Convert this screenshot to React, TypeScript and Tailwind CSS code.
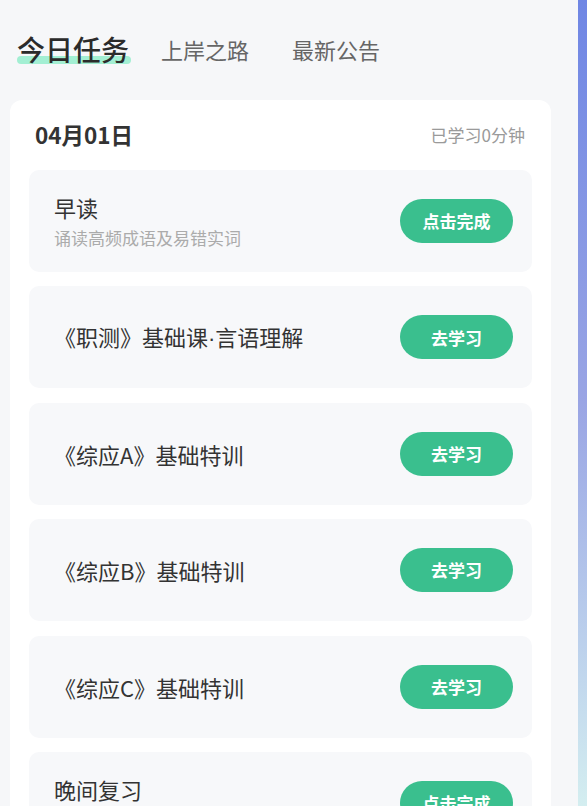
import React from "react";

const items: { title: React.ReactNode; sub?: string; btn: string }[] = [
  { title: "早读", sub: "诵读高频成语及易错实词", btn: "点击完成" },
  {
    title: (
      <>
        《职测》基础课
        <span style={{ fontFamily: '"Liberation Sans", sans-serif' }}>·</span>
        言语理解
      </>
    ),
    btn: "去学习",
  },
  { title: "《综应A》基础特训", btn: "去学习" },
  { title: "《综应B》基础特训", btn: "去学习" },
  { title: "《综应C》基础特训", btn: "去学习" },
  { title: "晚间复习", sub: "回顾今日所学内容", btn: "点击完成" },
];

export default function App() {
  return (
    <div
      className="flex w-[587px] h-[806px] overflow-hidden"
      style={{ fontFamily: '"Noto Sans CJK SC", "Noto Sans", sans-serif' }}
    >
      <div className="w-[578px] h-full bg-[#f6f7f9] flex flex-col">
        <div className="flex items-center shrink-0 h-[96px] pl-[17px] pt-[2px]">
          <div className="relative">
            <div className="absolute left-0 right-[-2px] top-[27px] h-[8px] rounded-full bg-[#a3efd3]" />
            <span className="relative text-[28px] leading-[40px] font-medium text-[#2b2b2b]">今日任务</span>
          </div>
          <span className="ml-[32px] text-[22px] leading-[40px] text-[#666]">上岸之路</span>
          <span className="ml-[43px] text-[22px] leading-[40px] text-[#666]">最新公告</span>
        </div>
        <div className="ml-[10px] w-[541px] mt-[4px] flex-1 bg-white rounded-t-[12px] px-[19px]">
          <div className="flex items-center justify-between h-[70px] pl-[6px] pr-[7px]">
            <span className="text-[22.5px] font-bold text-[#333]">04月01日</span>
            <span className="text-[17px] text-[#9a9a9a]">已学习0分钟</span>
          </div>
          <div className="flex flex-col gap-[14.4px]">
            {items.map((it, i) => (
              <div
                key={i}
                className="h-[102px] shrink-0 rounded-[10px] bg-[#f7f8fa] flex items-center justify-between pl-[25px] pr-[19px]"
              >
                <div className="flex flex-col">
                  <span className="text-[22px] leading-[30px] text-[#333]">{it.title}</span>
                  {it.sub && (
                    <span className="text-[17px] leading-[24px] mt-[4px] text-[#ababab]">{it.sub}</span>
                  )}
                </div>
                <div className="w-[113px] h-[44px] rounded-full bg-[#3abf8e] flex items-center justify-center text-white text-[17px] font-bold">
                  {it.btn}
                </div>
              </div>
            ))}
          </div>
        </div>
      </div>
      <div className="w-[9px] h-full bg-gradient-to-b from-[#6f86e4] via-[#9aa5e4] to-[#d4eef0]" />
    </div>
  );
}
